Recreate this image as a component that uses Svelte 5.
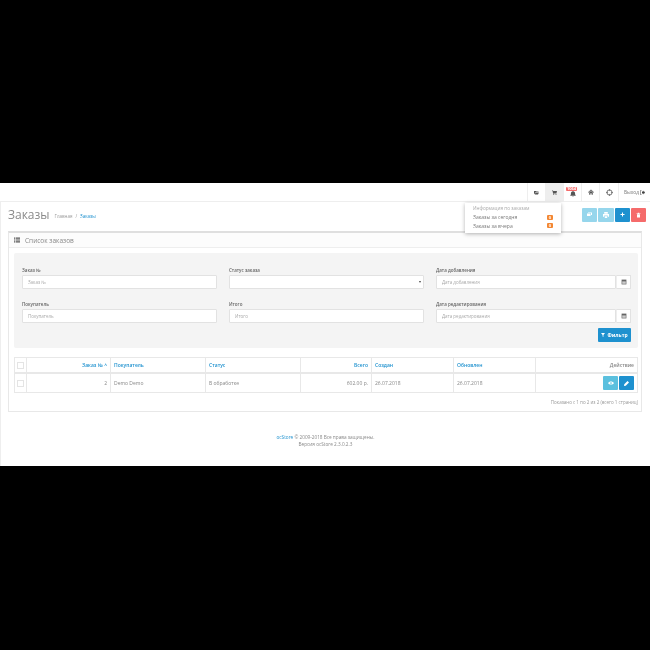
<script lang="ts">
  const cols = [
    { label: 'Заказ №', cls: 'num', value: '2', sort: true },
    { label: 'Покупатель', cls: 'buyer', value: 'Demo Demo' },
    { label: 'Статус', cls: 'status', value: 'В обработке' },
    { label: 'Всего', cls: 'total', value: '602.00 р.' },
    { label: 'Создан', cls: 'date', value: '26.07.2018' },
    { label: 'Обновлен', cls: 'date2', value: '26.07.2018' },
  ]
</script>

{#snippet calendar()}
  <span class="addon">
    <svg viewBox="0 0 10 10" width="6" height="6"><path d="M1 1h8v8H1z" fill="#666" /><path d="M2 4h6v4H2z" fill="#ccc" /></svg>
  </span>
{/snippet}

<div class="page">
  <header>
    <div class="spacer"></div>
    <div class="nav">
      <svg viewBox="0 0 10 10" width="5" height="5"><path d="M0 2h4l1 1h4v1H3L1 8H0zM3 5h7L8 9H1.500z" fill="#555" /></svg>
    </div>
    <div class="nav active">
      <svg viewBox="0 0 10 10" width="5" height="5"><path d="M0 1h2l.4 1H10L9 6H3l.3 1H9v1H2.500L1 2H0z" fill="#555" /><circle cx="3.500" cy="9" r="1" fill="#555" /><circle cx="8" cy="9" r="1" fill="#555" /></svg>
    </div>
    <div class="nav bell">
      <svg viewBox="0 0 10 10" width="6" height="6"><path d="M5 0a1 1 0 0 1 1 1c2 .5 2.500 2 2.500 4 0 1 .5 2 1.500 3H0c1-1 1.500-2 1.500-3 0-2 .5-3.500 2.500-4a1 1 0 0 1 1-1zM4 9h2a1 1 0 0 1-2 0z" fill="#555" /></svg>
      <span class="badge">1064</span>
    </div>
    <div class="nav">
      <svg viewBox="0 0 10 10" width="6" height="6"><path d="M5 1l5 4.500-.6.7L5 2.300.6 6.200 0 5.500zM2 6l3-2.600L8 6v3.500H6V7H4v2.500H2z" fill="#555" /></svg>
    </div>
    <div class="nav help">
      <svg viewBox="0 0 10 10" width="7" height="7"><circle cx="5" cy="5" r="3.700" fill="none" stroke="#666" stroke-width="1.300" /><path d="M5 0v3M5 7v3M0 5h3M7 5h3" stroke="#666" stroke-width="1" /></svg>
    </div>
    <div class="nav logout">
      <span>Выход</span>
      <svg viewBox="0 0 10 10" width="5" height="5"><path d="M4 3h3V1l3 4-3 4V7H4zM0 1h3v1H1v6h2v1H0z" fill="#444" /></svg>
    </div>
    <div class="menu">
      <div class="menu-title">Информация по заказам</div>
      <div class="menu-row"><span>Заказы за сегодня</span><b>0</b></div>
      <div class="menu-row"><span>Заказы за вчера</span><b>0</b></div>
    </div>
  </header>

  <main>
    <div class="title-row">
      <h1>Заказы</h1>
      <div class="crumbs"><span>Главная</span><i>/</i><a href="#top">Заказы</a></div>
      <div class="actions">
        <button class="sky" aria-label="Отправить">
          <svg viewBox="0 0 10 10" width="5" height="5"><path d="M0 3h7v5H0zM2 1h8v5H8V2H2z" fill="#fff" /></svg>
        </button>
        <button class="sky" aria-label="Печать">
          <svg viewBox="0 0 10 10" width="6" height="6"><path d="M2 0h6v3H2zM0 3.500h10V8H8V6H2v2H0zM3 7h4v3H3z" fill="#fff" /></svg>
        </button>
        <button class="blue" aria-label="Добавить">
          <svg viewBox="0 0 10 10" width="5" height="5"><path d="M4 1h2v3h3v2H6v3H4V6H1V4h3z" fill="#fff" /></svg>
        </button>
        <button class="red" aria-label="Удалить">
          <svg viewBox="0 0 10 10" width="5" height="6"><path d="M1 2h8v1H1zM3.500 .500h3V2h-3zM2 3.500h6V10H2z" fill="#fff" /></svg>
        </button>
      </div>
    </div>

    <section class="panel">
      <div class="panel-heading">
        <svg viewBox="0 0 10 10" width="6" height="6"><path d="M0 1h2v2H0zM3 1h7v2H3zM0 4h2v2H0zM3 4h7v2H3zM0 7h2v2H0zM3 7h7v2H3z" fill="#555" /></svg>
        <span>Список заказов</span>
      </div>
      <div class="panel-body">
        <div class="well">
          <div class="grid">
            <label>
              <span>Заказ №</span>
              <input placeholder="Заказ №" />
            </label>
            <label>
              <span>Статус заказа</span>
              <div class="select"><i></i></div>
            </label>
            <label>
              <span>Дата добавления</span>
              <div class="group"><input placeholder="Дата добавления" />{@render calendar()}</div>
            </label>
            <label>
              <span>Покупатель</span>
              <input placeholder="Покупатель" />
            </label>
            <label>
              <span>Итого</span>
              <input placeholder="Итого" />
            </label>
            <label>
              <span>Дата редактирования</span>
              <div class="group"><input placeholder="Дата редактирования" />{@render calendar()}</div>
            </label>
          </div>
          <div class="filter-row">
            <button class="blue filter">
              <svg viewBox="0 0 10 10" width="4" height="4"><path d="M0 0h10L6 5v5L4 8.500V5z" fill="#fff" /></svg>
              Фильтр
            </button>
          </div>
        </div>

        <table>
          <thead>
            <tr>
              <th class="check"><span class="box"></span></th>
              {#each cols as col}
                <th class={col.cls}><a href="#top">{col.label}{#if col.sort}&nbsp;^{/if}</a></th>
              {/each}
              <th class="act">Действие</th>
            </tr>
          </thead>
          <tbody>
            <tr>
              <td class="check"><span class="box"></span></td>
              {#each cols as col}
                <td class={col.cls}>{col.value}</td>
              {/each}
              <td class="act">
                <div class="row-btns">
                  <button class="cyan" aria-label="Просмотр">
                    <svg viewBox="0 0 10 10" width="6" height="6"><path d="M0 5c2-3.500 8-3.500 10 0-2 3.500-8 3.500-10 0z" fill="#fff" /><circle cx="5" cy="5" r="1.400" fill="#5bc0de" /></svg>
                  </button>
                  <button class="blue" aria-label="Изменить">
                    <svg viewBox="0 0 10 10" width="5" height="5"><path d="M7 0l3 3-6.500 6.500L0 10l.5-3.500z" fill="#fff" /></svg>
                  </button>
                </div>
              </td>
            </tr>
          </tbody>
        </table>

        <div class="pager">Показано с 1 по 2 из 2 (всего 1 страниц)</div>
      </div>
    </section>

    <footer>
      <div><a href="#top">ocStore</a> © 2009-2018 Все права защищены.</div>
      <div>Версия ocStore 2.3.0.2.3</div>
    </footer>
  </main>
</div>

<style>
  :global(body) {
    background: #000;
    font-family: 'Open Sans', 'Noto Sans', sans-serif;
    color: #666;
  }

  .page {
    margin-top: 183px;
    height: 283px;
    background: #fff;
    overflow: hidden;
    font-size: 5px;
    filter: blur(0.45px);
  }

  a {
    color: #1e91cf;
    text-decoration: none;
  }

  header {
    position: relative;
    display: flex;
    height: 18px;
    border-bottom: 1px solid #eee;
  }

  .spacer {
    flex: 1;
  }

  .nav {
    position: relative;
    display: flex;
    align-items: center;
    justify-content: center;
    width: 18px;
    border-left: 1px solid #eee;
    box-sizing: border-box;
  }

  .nav.active {
    background: #eee;
  }

  .bell svg {
    margin-top: 3px;
  }

  .help {
    width: 19px;
  }

  .logout {
    width: 32px;
    gap: 1px;
    padding-left: 5px;
    justify-content: flex-start;
    color: #777;
    font-size: 4.800px;
  }

  .badge {
    position: absolute;
    top: 4px;
    left: 2px;
    padding: 0 1px;
    background: #f56b6b;
    color: #fff;
    font-size: 4px;
    line-height: 4px;
    font-weight: 700;
    border-radius: 1px;
  }

  .menu {
    position: absolute;
    top: 20px;
    left: 465px;
    width: 96px;
    height: 30px;
    box-sizing: border-box;
    padding: 2px 8px;
    background: #fff;
    box-shadow: 0 1px 4px rgba(0, 0, 0, 0.3);
    z-index: 2;
  }

  .menu-title {
    color: #aaa;
    line-height: 7px;
    font-size: 4.700px;
    margin-bottom: 1px;
  }

  .menu-row {
    display: flex;
    justify-content: space-between;
    align-items: center;
    height: 8.500px;
    color: #777;
  }

  .menu-row b {
    width: 6px;
    height: 5px;
    background: #f38733;
    color: #fff;
    font-size: 4px;
    line-height: 5px;
    text-align: center;
    border-radius: 1px;
  }

  main {
    height: 264px;
    border-left: 1px solid #eee;
    padding: 0 7px;
  }

  .title-row {
    display: flex;
    align-items: center;
    height: 29px;
    box-sizing: border-box;
    padding-bottom: 4px;
    margin-right: -3px;
  }

  h1 {
    margin: 0 5px 0 0;
    font-size: 12px;
    font-weight: 400;
    color: #8a8a8a;
  }

  .crumbs {
    display: flex;
    gap: 3px;
    margin-top: 3px;
    color: #999;
    font-size: 4.500px;
  }

  .crumbs i {
    font-style: normal;
  }

  .actions {
    margin-left: auto;
    display: flex;
    gap: 1px;
  }

  .actions button {
    width: 15.250px;
  }

  button {
    display: flex;
    align-items: center;
    justify-content: center;
    gap: 2px;
    height: 14px;
    width: 15px;
    padding: 0;
    border: 0;
    border-radius: 1px;
    color: #fff;
    font: 700 5px 'Open Sans', sans-serif;
  }

  .sky {
    background: #96d6ec;
  }

  .blue {
    background: #1e91cf;
  }

  .red {
    background: #f56b6b;
  }

  .cyan {
    background: #5bc0de;
  }

  .panel {
    width: 634px;
    height: 181px;
    box-sizing: border-box;
    border: 1px solid #e8e8e8;
    border-top: 2px solid #dfdfdf;
  }

  .panel-heading {
    display: flex;
    align-items: center;
    gap: 5px;
    height: 14px;
    padding-left: 5px;
    border-bottom: 1px solid #eee;
    background: #fcfcfc;
    color: #888;
    font-size: 6.500px;
  }

  .panel-body {
    padding: 5px 3px 0 5px;
  }

  .well {
    height: 95px;
    box-sizing: border-box;
    padding: 14px 7px 0 8px;
    background: #f4f4f4;
    border-radius: 2px;
  }

  .grid {
    display: grid;
    grid-template-columns: repeat(3, 195px);
    column-gap: 12px;
    row-gap: 12px;
  }

  label {
    display: flex;
    flex-direction: column;
    gap: 1px;
  }

  label > span {
    font-weight: 600;
    font-size: 4.500px;
    line-height: 7px;
    color: #666;
  }

  input,
  .select {
    width: 100%;
    height: 14px;
    box-sizing: border-box;
    padding: 0 5px;
    border: 1px solid #e2e2e2;
    border-radius: 1px;
    background: #fff;
    font: 4.500px 'Open Sans', sans-serif;
    outline: none;
  }

  input::placeholder {
    color: #aaa;
  }

  .select {
    position: relative;
  }

  .select i {
    position: absolute;
    right: 2px;
    top: 5px;
    border: 1.500px solid transparent;
    border-top: 2px solid #444;
  }

  .group {
    display: flex;
  }

  .group input {
    flex: 1;
    min-width: 0;
  }

  .addon {
    display: flex;
    align-items: center;
    justify-content: center;
    width: 15px;
    height: 14px;
    box-sizing: border-box;
    background: #fff;
    border: 1px solid #e2e2e2;
    border-left: 1px solid #eee;
  }

  .filter-row {
    display: flex;
    justify-content: flex-end;
    margin-top: 5px;
  }

  .filter {
    width: 33px;
  }

  table {
    width: 624px;
    margin-top: 9px;
    border-collapse: collapse;
    table-layout: fixed;
    font-size: 5px;
  }

  th,
  td {
    border: 1px solid #e8e8e8;
    padding: 0 3px;
    text-align: left;
    overflow: hidden;
    white-space: nowrap;
    color: #888;
  }

  th {
    height: 14px;
    border-bottom-width: 2px;
    font-weight: 600;
  }

  td {
    height: 18px;
  }

  .check {
    width: 12px;
    padding: 0;
    text-align: center;
    box-sizing: border-box;
  }

  .box {
    display: inline-block;
    width: 5px;
    height: 5px;
    border: 1px solid #e4e4e4;
    vertical-align: middle;
  }

  .num {
    width: 84px;
    box-sizing: border-box;
    text-align: right;
  }

  .buyer,
  .status {
    width: 95px;
    box-sizing: border-box;
  }

  .total {
    width: 71px;
    box-sizing: border-box;
    text-align: right;
  }

  .date,
  .date2 {
    width: 82px;
    box-sizing: border-box;
  }

  .act {
    text-align: right;
  }

  .row-btns {
    display: flex;
    justify-content: flex-end;
    gap: 1px;
  }

  .pager {
    margin-top: 6px;
    text-align: right;
    font-size: 4.500px;
    color: #999;
  }

  footer {
    margin-top: 22px;
    text-align: center;
    line-height: 6.500px;
    font-size: 4.700px;
    color: #888;
  }
</style>
